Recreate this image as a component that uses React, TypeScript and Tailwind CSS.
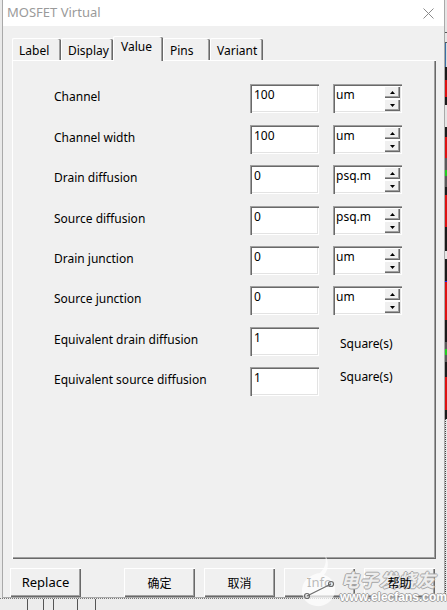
import React from "react";

const raised =
  "shadow-[inset_1px_1px_0_#ffffff,inset_-1px_-1px_0_#696969,inset_-2px_-2px_0_#a0a0a0]";
const sunken =
  "shadow-[inset_1px_1px_0_#a0a0a0,inset_2px_2px_0_#696969,inset_-1px_-1px_0_#ffffff,inset_-2px_-2px_0_#e3e3e3]";

const rows = [
  { label: "Channel", value: "100", unit: "um", h: "h-[41px]" },
  { label: "Channel width", value: "100", unit: "um", h: "h-[40px]" },
  { label: "Drain diffusion", value: "0", unit: "psq.m", h: "h-[41px]" },
  { label: "Source diffusion", value: "0", unit: "psq.m", h: "h-[40px]" },
  { label: "Drain junction", value: "0", unit: "um", h: "h-[40px]" },
  { label: "Source junction", value: "0", unit: "um", h: "h-[41px]" },
];

function Arrow({ up }: { up?: boolean }) {
  return (
    <svg width="5" height="3" viewBox="0 0 5 3">
      <polygon points={up ? "2.5,0 5,3 0,3" : "0,0 5,0 2.5,3"} fill="#000" />
    </svg>
  );
}

function TextBox({ value }: { value: string }) {
  return (
    <div className={`w-[69px] h-[29px] bg-white pl-[4px] pt-[3px] leading-[16px] ${sunken}`}>
      {value}
    </div>
  );
}

function UnitBox({ unit }: { unit: string }) {
  return (
    <div className={`w-[69px] h-[29px] bg-white flex p-[2px] ${sunken}`}>
      <div className="flex-1 pl-[1px] pt-[1px] leading-[16px]">{unit}</div>
      <div className="w-[16px] flex flex-col gap-[1px]">
        <div className={`h-[12px] bg-[#f0f0f0] flex items-center justify-center ${raised}`}>
          <Arrow up />
        </div>
        <div className={`h-[12px] bg-[#f0f0f0] flex items-center justify-center ${raised}`}>
          <Arrow />
        </div>
      </div>
    </div>
  );
}

function Tab({ label, w, active }: { label: string; w: string; active?: boolean }) {
  return (
    <div
      className={`${w} ${
        active
          ? "h-[25px] -mb-[1px] z-10 pt-[2px] px-[7px] bg-[#f0f0f0]"
          : "h-[22px] pt-[4px] px-[6px]"
      } relative rounded-t-[2px] border-l border-t border-white shadow-[inset_-1px_0_0_#696969,inset_-2px_0_0_#a0a0a0] leading-[16px]`}
    >
      {label}
    </div>
  );
}

function Btn({ children, cjk, top }: { children: React.ReactNode; cjk?: boolean; top?: boolean }) {
  return (
    <div
      className={`w-[71px] h-[29px] bg-[#f0f0f0] flex items-center justify-center ${raised} ${
        cjk ? "font-['Noto_Sans_CJK_SC',sans-serif] text-[12px]" : "text-[13px]"
      }`}
    >
      <span className={top ? "relative z-20" : ""}>{children}</span>
    </div>
  );
}

export default function App() {
  return (
    <div className="w-[447px] h-[610px] bg-[#f0f0f0] flex flex-col overflow-hidden relative font-['Noto_Sans','Noto_Sans_CJK_SC',sans-serif] text-[12px] text-black">
      <div className="flex h-[598px]">
        <div className="w-[2px] bg-[#e9e9e9]" />
        {/* dialog window */}
        <div className="w-[443px] flex flex-col border-x border-b border-[#a9a9a9] bg-[#f0f0f0]">
          <div className="h-[26px] bg-white flex items-center justify-between pl-[4px] pr-[10px]">
            <span className="text-[#9a9a9a] text-[13px]">MOSFET Virtual</span>
            <svg width="11" height="11" viewBox="0 0 11 11">
              <path d="M0.5 0.5L10.5 10.5M10.5 0.5L0.5 10.5" stroke="#8a8a8a" strokeWidth="1" />
            </svg>
          </div>

          <div className="flex items-end pl-[9px] mt-[10px] h-[24px]">
            <Tab label="Label" w="w-[49px]" />
            <Tab label="Display" w="w-[52px]" />
            <Tab label="Value" w="w-[50px]" active />
            <Tab label="Pins" w="w-[47px]" />
            <Tab label="Variant" w="w-[53px]" />
          </div>

          <div className="ml-[9px] w-[424px] h-[499px] border-l border-t border-white shadow-[inset_-1px_-1px_0_#696969,inset_-2px_-2px_0_#a0a0a0] pt-[23px] pl-[41px] flex flex-col">
            {rows.map((r) => (
              <div key={r.label} className={`${r.h} flex items-start`}>
                <div className="w-[196px] mt-[5px] leading-[16px]">{r.label}</div>
                <TextBox value={r.value} />
                <div className="w-[14px]" />
                <UnitBox unit={r.unit} />
              </div>
            ))}
            <div className="h-[40px] flex items-start">
              <div className="w-[196px] mt-[5px] leading-[16px]">Equivalent drain diffusion</div>
              <TextBox value="1" />
              <div className="ml-[21px] mt-[9px] leading-[16px]">Square(s)</div>
            </div>
            <div className="h-[40px] flex items-start">
              <div className="w-[196px] mt-[5px] leading-[16px]">Equivalent source diffusion</div>
              <TextBox value="1" />
              <div className="ml-[21px] mt-[2px] leading-[16px]">Square(s)</div>
            </div>
          </div>

          <div className="flex mt-[9px] pl-[7px]">
            <Btn>Replace</Btn>
            <div className="w-[43px]" />
            <div className="flex gap-[9px]">
              <Btn cjk>确定</Btn>
              <Btn cjk>取消</Btn>
              <Btn>Info</Btn>
              <Btn cjk top>帮助</Btn>
            </div>
          </div>
        </div>

        {/* schematic behind the dialog */}
        <div className="flex-1 flex flex-col bg-[#e6e6e6]">
          <div className="h-[33px] border-b border-[#555]" />
          <div className="h-[10px] border-b border-[#555]" />
          <div className="h-[24px] bg-[#dcdcdc] border-l border-[#3a6ea5]" />
          <div className="h-[13px] bg-[#1a1a1a]" />
          <div className="h-[17px] bg-[#d11]" />
          <div className="h-[8px] bg-[#1a1a1a]" />
          <div className="h-[22px]" />
          <div className="h-[10px] bg-[#1a1a1a]" />
          <div className="h-[21px] bg-[#d11]" />
          <div className="h-[29px] bg-[#5a5a5a] flex items-center">
            <div className="w-[2px] h-[6px] bg-[#2c2]" />
          </div>
          <div className="h-[8px] bg-[#1a1a1a]" />
          <div className="h-[32px] bg-[#d11]" />
          <div className="h-[24px] bg-[#1a1a1a]" />
          <div className="h-[8px]" />
          <div className="h-[22px] bg-[#1a1a1a]" />
          <div className="h-[39px] bg-[#d11] border-t border-[#22f]" />
          <div className="h-[22px] bg-[#1a1a1a]" />
          <div className="h-[20px] bg-[#5a5a5a] flex items-center">
            <div className="w-[2px] h-[6px] bg-[#2c2]" />
          </div>
          <div className="h-[15px] bg-[#1a1a1a]" />
          <div className="h-[33px] bg-[#d11]" />
          <div className="h-[9px] bg-[#1a1a1a]" />
          <div className="flex-1 border-l border-dotted border-[#444]" />
        </div>
      </div>

      <div className="flex-1 flex bg-[#ececec] border-t border-dotted border-[#777]">
        <div className="ml-[27px] w-px bg-[#555]" />
        <div className="ml-[15px] w-px bg-[#555]" />
        <div className="ml-[9px] w-px bg-[#555]" />
        <div className="ml-[23px] w-px bg-[#555]" />
        <div className="ml-[17px] w-px bg-[#555]" />
      </div>

      {/* elecfans watermark */}
      <div className="absolute left-[298px] top-[552px] w-[148px] h-[56px] pointer-events-none">
        <svg width="40" height="56" viewBox="0 0 40 56" className="absolute left-0 top-0">
          <path
            d="M27 3 C31 9 31 17 26 23 C34 25 38 32 37 40 C35 50 26 55 18 54 C9 53 3 46 4 37 C5 28 13 22 22 21 C27 16 29 10 27 3 Z"
            fill="#ffffff"
            fillOpacity="0.72"
          />
          <path d="M9 44 L33 32" stroke="#6a6a6a" strokeWidth="1.2" />
          <circle cx="9" cy="44" r="2.5" fill="none" stroke="#6a6a6a" strokeWidth="1.2" />
          <circle cx="33" cy="32" r="2.5" fill="none" stroke="#6a6a6a" strokeWidth="1.2" />
        </svg>
        <div className="absolute left-[43px] top-[17px] text-[18px] leading-[21px] italic text-white/80 font-['Noto_Sans_CJK_SC',sans-serif] font-bold tracking-[1px] [text-shadow:1px_0_0_#a5a5a5,-1px_0_0_#a5a5a5,0_1px_0_#a5a5a5,0_-1px_0_#a5a5a5]">
          电子发烧友
        </div>
        <div className="absolute left-[42px] top-[38px] text-[12px] leading-[14px] font-bold text-white font-['Liberation_Sans',sans-serif] [text-shadow:1px_0_0_#a5a5a5,-1px_0_0_#a5a5a5,0_1px_0_#a5a5a5,0_-1px_0_#a5a5a5]">
          www.elecfans.com
        </div>
      </div>
    </div>
  );
}
